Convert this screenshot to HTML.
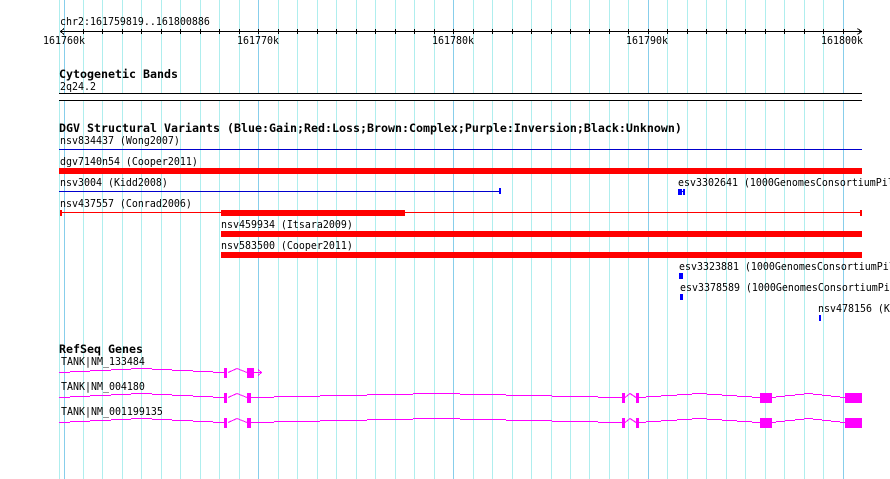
<!DOCTYPE html>
<html>
<head>
<meta charset="utf-8">
<style>
html,body{margin:0;padding:0;background:#fff;width:890px;height:479px;overflow:hidden}
svg{display:block}
text{font-family:"DejaVu Sans Mono","Liberation Mono",monospace;font-size:11px;fill:#000;white-space:pre}
text.b{font-weight:bold;font-size:11.63px}
</style>
</head>
<body>
<svg width="890" height="479" viewBox="0 0 890 479" xmlns="http://www.w3.org/2000/svg">
<rect width="890" height="479" fill="#fff"/>
<g shape-rendering="crispEdges" fill="none">
<path stroke="#afeeee" d="M59.5 0V479M83.5 0V479M102.5 0V479M122.5 0V479M141.5 0V479M161.5 0V479M180.5 0V479M200.5 0V479M219.5 0V479M239.5 0V479M278.5 0V479M297.5 0V479M317.5 0V479M336.5 0V479M356.5 0V479M375.5 0V479M395.5 0V479M414.5 0V479M434.5 0V479M473.5 0V479M492.5 0V479M512.5 0V479M531.5 0V479M551.5 0V479M570.5 0V479M589.5 0V479M609.5 0V479M628.5 0V479M667.5 0V479M687.5 0V479M706.5 0V479M726.5 0V479M745.5 0V479M765.5 0V479M784.5 0V479M804.5 0V479M823.5 0V479"/>
<path stroke="#87ceeb" d="M64.5 0V479M258.5 0V479M453.5 0V479M648.5 0V479M843.5 0V479"/>

<!-- axis -->
<path stroke="#000" d="M60 31.5H862M83.5 29V34M102.5 29V34M122.5 29V34M141.5 29V34M161.5 29V34M180.5 29V34M200.5 29V34M219.5 29V34M239.5 29V34M258.5 29V34M278.5 29V34M297.5 29V34M317.5 29V34M336.5 29V34M356.5 29V34M375.5 29V34M395.5 29V34M414.5 29V34M434.5 29V34M453.5 29V34M473.5 29V34M492.5 29V34M512.5 29V34M531.5 29V34M551.5 29V34M570.5 29V34M589.5 29V34M609.5 29V34M628.5 29V34M648.5 29V34M667.5 29V34M687.5 29V34M706.5 29V34M726.5 29V34M745.5 29V34M765.5 29V34M784.5 29V34M804.5 29V34M823.5 29V34M843.5 29V34"/>
<path stroke="#000" d="M64 28.5L60.5 31.5L64 34.5M857.5 28.5L861.5 31.5L857.5 34.5"/>

<!-- cytoband -->
<rect x="59" y="94" width="803" height="6" fill="#fff"/>
<path stroke="#000" d="M59 93.5H862M59 100.5H862"/>

<!-- DGV -->
<path stroke="#0000cd" d="M59 149.5H862M59 191.5H499"/>
<rect x="499" y="188" width="2" height="6" fill="#0000ff"/>
<rect x="59" y="168" width="803" height="6" fill="#ff0000"/>
<path stroke="#ff0000" d="M60 212.5H862"/>
<rect x="60" y="210" width="2" height="6" fill="#ff0000"/>
<rect x="860" y="210" width="2" height="6" fill="#ff0000"/>
<rect x="221" y="210" width="184" height="6" fill="#ff0000"/>
<rect x="221" y="231" width="641" height="6" fill="#ff0000"/>
<rect x="221" y="252" width="641" height="6" fill="#ff0000"/>
<rect x="678" y="189" width="4" height="6" fill="#0000ff"/>
<rect x="683" y="189" width="2" height="6" fill="#0000ff"/>
<rect x="682" y="191" width="1" height="1" fill="#0000ff"/>
<rect x="679" y="273" width="4" height="6" fill="#0000ff"/>
<rect x="680" y="294" width="3" height="6" fill="#0000ff"/>
<rect x="819" y="315" width="2" height="6" fill="#0000ff"/>

<!-- Gene 1 -->
<path stroke="#ff00ff" d="M59 372.5H70M70 371.5H90M90 370.5H111M111 369.5H131M131 368.5H152M152 369.5H172M172 370.5H193M193 371.5H213M213 372.5H224M228 372.5L237 368.5L247 372.5M254 372.5H261M258 369.5L261.5 372.5L258 375.5"/>
<rect x="224" y="368" width="3" height="10" fill="#ff00ff"/>
<rect x="247" y="368" width="7" height="10" fill="#ff00ff"/>

<!-- Gene 2 -->
<path stroke="#ff00ff" d="M59 397.5H70M70 396.5H90M90 395.5H111M111 394.5H131M131 393.5H152M152 394.5H172M172 395.5H193M193 396.5H213M213 397.5H224M228 397.5L237 393.5L247 397.5M251 397.5H274M274 396.5H320M320 395.5H367M367 394.5H413M413 393.5H460M460 394.5H506M506 395.5H552M552 396.5H598M598 397.5H622M625 397.5L630 393.5L636 397.5M639 397.5H646M646 396.5H661M661 395.5H677M677 394.5H692M692 393.5H707M707 394.5H722M722 395.5H737M737 396.5H752M752 397.5H760M772 397.5H776M776 396.5H785M785 395.5H795M795 394.5H804M804 393.5H813M813 394.5H822M822 395.5H831M831 396.5H840M840 397.5H845"/>
<rect x="224" y="393" width="3" height="10" fill="#ff00ff"/>
<rect x="247" y="393" width="4" height="10" fill="#ff00ff"/>
<rect x="622" y="393" width="3" height="10" fill="#ff00ff"/>
<rect x="636" y="393" width="3" height="10" fill="#ff00ff"/>
<rect x="760" y="393" width="12" height="10" fill="#ff00ff"/>
<rect x="845" y="393" width="17" height="10" fill="#ff00ff"/>

<!-- Gene 3 -->
<path stroke="#ff00ff" d="M59 422.5H70M70 421.5H90M90 420.5H111M111 419.5H131M131 418.5H152M152 419.5H172M172 420.5H193M193 421.5H213M213 422.5H224M228 422.5L237 418.5L247 422.5M251 422.5H274M274 421.5H320M320 420.5H367M367 419.5H413M413 418.5H460M460 419.5H506M506 420.5H552M552 421.5H598M598 422.5H622M625 422.5L630 418.5L636 422.5M639 422.5H646M646 421.5H661M661 420.5H677M677 419.5H692M692 418.5H707M707 419.5H722M722 420.5H737M737 421.5H752M752 422.5H760M772 422.5H776M776 421.5H785M785 420.5H795M795 419.5H804M804 418.5H813M813 419.5H822M822 420.5H831M831 421.5H840M840 422.5H845"/>
<rect x="224" y="418" width="3" height="10" fill="#ff00ff"/>
<rect x="247" y="418" width="4" height="10" fill="#ff00ff"/>
<rect x="622" y="418" width="3" height="10" fill="#ff00ff"/>
<rect x="636" y="418" width="3" height="10" fill="#ff00ff"/>
<rect x="760" y="418" width="12" height="10" fill="#ff00ff"/>
<rect x="845" y="418" width="17" height="10" fill="#ff00ff"/>
</g>

<text transform="translate(60 25) scale(.906 1)">chr2:161759819..161800886</text>
<text transform="translate(43 44) scale(.906 1)">161760k</text>
<text transform="translate(237 44) scale(.906 1)">161770k</text>
<text transform="translate(432 44) scale(.906 1)">161780k</text>
<text transform="translate(626 44) scale(.906 1)">161790k</text>
<text transform="translate(821 44) scale(.906 1)">161800k</text>

<text class="b" x="59" y="78">Cytogenetic Bands</text>
<text transform="translate(60 90) scale(.906 1)">2q24.2</text>

<text class="b" x="59" y="132">DGV Structural Variants (Blue:Gain;Red:Loss;Brown:Complex;Purple:Inversion;Black:Unknown)</text>
<text transform="translate(60 144) scale(.906 1)">nsv834437 (Wong2007)</text>
<text transform="translate(60 165) scale(.906 1)">dgv7140n54 (Cooper2011)</text>
<text transform="translate(60 186) scale(.906 1)">nsv3004 (Kidd2008)</text>
<text transform="translate(60 207) scale(.906 1)">nsv437557 (Conrad2006)</text>
<text transform="translate(221 228) scale(.906 1)">nsv459934 (Itsara2009)</text>
<text transform="translate(221 249) scale(.906 1)">nsv583500 (Cooper2011)</text>
<text transform="translate(678 186) scale(.906 1)">esv3302641 (1000GenomesConsortiumPilotProject)</text>
<text transform="translate(679 270) scale(.906 1)">esv3323881 (1000GenomesConsortiumPilotProject)</text>
<text transform="translate(680 291) scale(.906 1)">esv3378589 (1000GenomesConsortiumPilotProject)</text>
<text transform="translate(818 312) scale(.906 1)">nsv478156 (Kidd2010)</text>

<text class="b" x="59" y="353">RefSeq Genes</text>
<text transform="translate(61 365) scale(.906 1)">TANK|NM_133484</text>
<text transform="translate(61 390) scale(.906 1)">TANK|NM_004180</text>
<text transform="translate(61 415) scale(.906 1)">TANK|NM_001199135</text>
</svg>
</body>
</html>
